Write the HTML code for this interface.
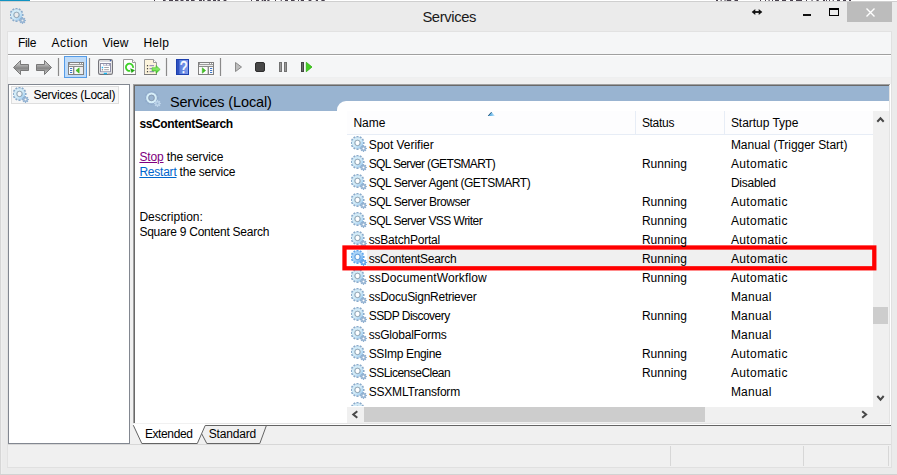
<!DOCTYPE html>
<html><head><meta charset="utf-8"><title>Services</title>
<style>
html,body{margin:0;padding:0}
body{width:897px;height:475px;overflow:hidden;background:#ebebeb;position:relative;font-family:"Liberation Sans",sans-serif;font-size:12px;color:#000}
.a{position:absolute}
.t{position:absolute;white-space:pre}
u{text-decoration:underline}
</style></head><body>
<!-- top edge remnants -->
<div class="a" style="left:0;top:0;width:897px;height:1px;background:#fff"></div>
<div class="a" style="left:0;top:0;width:30px;height:1px;background:#1193c2"></div>
<svg class="a" style="left:0;top:0" width="897" height="1" viewBox="0 0 897 1"><path d="M154 .5h1M163 .5h2.6M169 .5h4M175 .5h3.4M180.5 .5h3M186 .5h3M191 .5h3.6M199 .5h3M203 .5h1.6M207.4 .5h3.4M213 .5h3M217.5 .5h2.5M223.6 .5h2.8M251 .5h1M256 .5h3M261.7 .5h1.7M264 .5h2M267.3 .5h2.2M275 .5h1M280.7 .5h1.1M285 .5h3M291 .5h3.6M298 .5h1M300.8 .5h3.2M308.6 .5h2.8M315.8 .5h2.2M321.4 .5h3.3M716 .5h2M720.6 .5h1.1M724.5 .5h1.1M726.7 .5h4.5M734.5 .5h3.5M760 .5h1M765 .5h1M768.5 .5h1.2M772 .5h1M775 .5h4M782 .5h4M790 .5h3M796 .5h6M806 .5h1M811.5 .5h1.1M816.5 .5h2.2M823 .5h2M826 .5h1M829 .5h1M832.7 .5h1.1M837 .5h3M843 .5h3M849 .5h2" stroke="#2a2030" stroke-width="1" opacity=".85"/></svg>
<div class="a" style="left:0;top:1px;width:897px;height:1px;background:#cfcfcf"></div>
<div class="a" style="left:0;top:2px;width:1px;height:473px;background:#d6d6d6"></div><div class="a" style="left:1px;top:2px;width:1px;height:472px;background:#efefef"></div>
<!-- caption buttons -->
<div class="a" style="left:847px;top:2px;width:45px;height:20px;background:#bcbcbc"></div>
<svg class="a" style="left:0;top:0" width="897" height="32" viewBox="0 0 897 32">
 <path d="M866.5 8.5l8 8M874.5 8.5l-8 8" stroke="#fff" stroke-width="1.400" fill="none"/>
 <rect x="803" y="14" width="8" height="2" fill="#111"/>
 <rect x="829.5" y="8.5" width="9" height="7" fill="none" stroke="#000" stroke-width="1"/>
 <rect x="829" y="8" width="10" height="2" fill="#000"/>
 <path d="M753.500 12H760.500" stroke="#111" stroke-width="1.800" fill="none"/><path d="M751.700 12L755.300 8.900V15.100ZM762.300 12L758.700 8.900V15.100Z" fill="#111"/>
</svg>
<!-- client area -->
<div class="a" style="left:7px;top:31px;width:885px;height:437px;background:#f0f0f0"></div>
<div class="a" style="left:7px;top:31px;width:1px;height:437px;background:#e2e2e2"></div>
<div class="a" style="left:891px;top:31px;width:1px;height:437px;background:#e0e0e0"></div>
<div class="a" style="left:7px;top:467px;width:885px;height:1px;background:#e0e0e0"></div>
<div class="a" style="left:0;top:474px;width:897px;height:1px;background:#d2d2d2"></div>
<!-- menu bar -->
<div class="a" style="left:8px;top:32px;width:883px;height:22px;background:#f5f6f7"></div>
<div class="a" style="left:7px;top:31px;width:885px;height:1px;background:#e2e2e2"></div>
<div class="a" style="left:8px;top:54px;width:883px;height:1px;background:#a0a0a0"></div>
<!-- toolbar -->
<div class="a" style="left:8px;top:55px;width:883px;height:22px;background:#f5f6f7"></div>
<div class="a" style="left:8px;top:55px;width:883px;height:1px;background:#fff"></div>
<div class="a" style="left:8px;top:77px;width:883px;height:1px;background:#eeeff0"></div>
<svg class="a" style="left:0;top:55px" width="330" height="28" viewBox="0 55 330 28">
<defs>
<linearGradient id="ag" x1="0" y1="0" x2="0" y2="1"><stop offset="0" stop-color="#cfcfcf"/><stop offset=".3" stop-color="#b4b4b4"/><stop offset=".55" stop-color="#868686"/><stop offset=".8" stop-color="#b0b0b0"/><stop offset="1" stop-color="#c8c8c8"/></linearGradient>
<linearGradient id="hb" x1="0" y1="0" x2="1" y2="0"><stop offset="0" stop-color="#4f72d8"/><stop offset="1" stop-color="#7f9eec"/></linearGradient>
<linearGradient id="grn" x1="0" y1="0" x2="0" y2="1"><stop offset="0" stop-color="#4ccc2c"/><stop offset=".45" stop-color="#8aec68"/><stop offset="1" stop-color="#2cb418"/></linearGradient>
</defs>
<!-- back / forward arrows -->
<path d="M13.5 67.5L20.5 60.5V64.5H28.5V70.5H20.5V74.5Z" fill="url(#ag)" stroke="#6e6e6e" stroke-width=".9" stroke-linejoin="round"/>
<path d="M51.5 67.5L44.5 60.5V64.5H36.5V70.5H44.5V74.5Z" fill="url(#ag)" stroke="#6e6e6e" stroke-width=".9" stroke-linejoin="round"/>
<!-- separators -->
<path d="M58.5 58V76M89.5 58V76M166.5 58V76M220.5 58V76" stroke="#8a8a8a" stroke-width="1.2"/>
<!-- pressed highlight -->
<rect x="64.5" y="56.5" width="22" height="21" fill="#bfdbf8" stroke="#559ce8" stroke-width="1"/>
<!-- console tree icon -->
<g>
<rect x="68.500" y="62.500" width="15" height="12" fill="#fbfbfb" stroke="#808080"/>
<rect x="69" y="63" width="14" height="2" fill="#9c9c9c"/>
<rect x="70" y="63" width="9" height="1" fill="#f4f4f4"/><rect x="80" y="63" width="1" height="1" fill="#fff"/><rect x="82" y="63" width="1" height="1" fill="#fff"/>
<path d="M69 65.500H83" stroke="#ececec" stroke-width="1"/>
<path d="M69 66.500H83" stroke="#8c8c8c" stroke-width="1"/>
<path d="M73.700 67V74" stroke="#808080" stroke-width="1.300"/>
<path d="M70 68.500h2.200M70 70.500h2.200M70 72.500h2.200" stroke="#3f78c8" stroke-width="1"/>
<rect x="80" y="67" width="3" height="7" fill="#ececec"/>
<path d="M79.200 67.800V73.200L75.900 70.500Z" fill="#45c224" stroke="#2fa616" stroke-width=".5"/>
</g>
<!-- properties icon -->
<g>
<rect x="98.600" y="59.600" width="13.800" height="14.800" rx="1.600" fill="#fdfdfe" stroke="#74747a" stroke-width="1.200"/>
<path d="M99.500 61.500H111" stroke="#dcdce0" stroke-width="1"/>
<rect x="109.800" y="60" width="1.400" height="1.300" fill="#3f5fa8"/>
<rect x="100.500" y="63.500" width="10" height="8.300" fill="#fff" stroke="#9090a8" stroke-width="1"/>
<rect x="103.300" y="64" width="6.700" height="1.800" fill="#a6a6bc"/>
<rect x="104" y="64.200" width="2" height="1.100" fill="#fff"/><rect x="107" y="64.200" width="2" height="1.100" fill="#fff"/>
<rect x="101.700" y="66.800" width="1.500" height="1.500" fill="#1eb4f4"/>
<rect x="101.800" y="69.100" width="1.300" height="1.300" fill="#8c8c90"/>
<path d="M104.200 67.500H108.900M104.200 69.700H108.900" stroke="#a2a2a6" stroke-width="1"/>
<rect x="103.800" y="72.800" width="3.200" height="1.400" fill="#18b8f0"/>
<rect x="108.200" y="72.800" width="3" height="1.400" fill="#c2c2c2"/>
</g>
<!-- refresh icon -->
<g>
<path d="M123.500 59.500H132.500L135.500 62.500V74.500H123.500Z" fill="#fdfdfd" stroke="#9a9a9a" stroke-width="1"/>
<path d="M123 74.500H136" stroke="#7c7c7c" stroke-width="1"/>
<path d="M132.500 59.500V62.500H135.500" fill="#fff" stroke="#9a9a9a" stroke-width="1"/>
<path d="M133.06 67.80A3.6 3.6 0 1 0 130.25 70.82" fill="none" stroke="#3bd026" stroke-width="1.800"/>
<path d="M130.200 68.300L135 70.200L131.600 72.900Z" fill="#22a614"/>
</g>
<!-- export list icon -->
<g>
<path d="M144.500 59.500H153.500L156.500 62.500V74.500H144.500Z" fill="#fcf4dc" stroke="#9a9a9a" stroke-width="1"/>
<path d="M144 74.500H157" stroke="#7c7c7c" stroke-width="1"/>
<path d="M153.500 59.500V62.500H156.500" fill="#fff" stroke="#9a9a9a" stroke-width="1"/>
<rect x="146.900" y="65.100" width="1.200" height="1.200" fill="#333"/><rect x="146.900" y="68.100" width="1.200" height="1.200" fill="#333"/><rect x="146.900" y="71.100" width="1.200" height="1.200" fill="#333"/>
<path d="M149.500 65.700H154M149.500 68.700H154M149.500 71.700H154" stroke="#8580b4" stroke-width="1"/>
<path d="M152 67.700H156V65.400L160.200 69.400L156 73.400V71.100H152Z" fill="url(#grn)" stroke="#35b520" stroke-width=".5"/>
</g>
<!-- help icon -->
<g>
<rect x="176.500" y="59.500" width="12" height="15" fill="url(#hb)" stroke="#1c3fae" stroke-width="1"/>
<rect x="177" y="60" width="2.300" height="14" fill="#2f52c0"/>
<text transform="translate(183.500 72.500) scale(.82 1)" text-anchor="middle" font-family="Liberation Sans, sans-serif" font-weight="400" font-size="15.800" fill="#fff" stroke="#fff" stroke-width=".4">?</text>
</g>
<!-- action pane icon -->
<g>
<rect x="198.500" y="62.500" width="15" height="12" fill="#fbfbfb" stroke="#808080"/>
<rect x="199" y="63" width="14" height="2" fill="#9c9c9c"/>
<rect x="200" y="63" width="9" height="1" fill="#f4f4f4"/><rect x="210" y="63" width="1" height="1" fill="#fff"/><rect x="212" y="63" width="1" height="1" fill="#fff"/>
<path d="M199 65.500H213" stroke="#ececec" stroke-width="1"/>
<path d="M199 66.500H213" stroke="#8c8c8c" stroke-width="1"/>
<path d="M208.300 67V74" stroke="#808080" stroke-width="1.300"/>
<path d="M210 68.500h2.200M210 70.500h2.200M210 72.500h2.200" stroke="#3f78c8" stroke-width="1"/>
<path d="M202.300 67.800V73.200L205.600 70.500Z" fill="#45c224" stroke="#2fa616" stroke-width=".5"/>
</g>
<!-- play / stop / pause / restart -->
<path d="M235.500 62.500L241.500 67L235.500 71.500Z" fill="#bdbdbd" stroke="#8a8a8a" stroke-width="1" stroke-linejoin="round"/>
<rect x="255.500" y="62.500" width="9" height="9" rx="1.500" fill="#474747" stroke="#2e2e2e" stroke-width="1"/>
<rect x="279.500" y="62.500" width="2" height="9" fill="#9a9a9a" stroke="#727272" stroke-width="1"/>
<rect x="284.500" y="62.500" width="2" height="9" fill="#9a9a9a" stroke="#727272" stroke-width="1"/>
<rect x="301.500" y="62.500" width="2" height="9" fill="#6a6a6a" stroke="#444" stroke-width="1"/>
<path d="M306.300 62.300L312 67L306.300 71.700Z" fill="#45cf22" stroke="#2fb012" stroke-width=".8" stroke-linejoin="round"/>
</svg>

<!-- left tree panel -->
<div class="a" style="left:8px;top:84px;width:122px;height:360px;background:#fff;border:1px solid #828790;box-sizing:border-box"></div>
<div class="a" style="left:11px;top:86px;width:108px;height:18px;border:1px solid #dedede;box-sizing:border-box;background:#f7f7f7"></div>
<!-- right panel: sunken 3D border -->
<div class="a" style="left:133px;top:84px;width:758px;height:341px;background:#fff"></div>
<div class="a" style="left:133px;top:84px;width:757px;height:1px;background:#a0a0a0"></div>
<div class="a" style="left:133px;top:84px;width:1px;height:339px;background:#a0a0a0"></div>
<div class="a" style="left:134px;top:85px;width:755px;height:1px;background:#696969"></div>
<div class="a" style="left:134px;top:85px;width:1px;height:338px;background:#696969"></div>
<div class="a" style="left:889px;top:85px;width:1px;height:339px;background:#e3e3e3"></div>
<div class="a" style="left:133px;top:423px;width:757px;height:1px;background:#e3e3e3"></div>
<div class="a" style="left:135px;top:86px;width:754px;height:25px;background:#99b4d1"></div>
<div class="a" style="left:337px;top:101px;width:552px;height:20px;background:#fff;border-top-left-radius:9px"></div>
<!-- list header -->
<div class="a" style="left:347px;top:111px;width:526px;height:23px;background:#fdfdfe"></div>
<div class="a" style="left:347px;top:134px;width:526px;height:1px;background:#e7edf6"></div>
<div class="a" style="left:635px;top:111px;width:1px;height:23px;background:#e7edf6"></div>
<div class="a" style="left:724px;top:111px;width:1px;height:23px;background:#e7edf6"></div>
<svg class="a" style="left:486px;top:110px" width="12" height="8" viewBox="486 110 12 8"><defs><linearGradient id="sa" x1="0" y1="0" x2="1" y2="0"><stop offset="0" stop-color="#3f8fc8"/><stop offset=".5" stop-color="#79c0ec"/><stop offset="1" stop-color="#d4ecfa"/></linearGradient></defs><path d="M488 116L491.500 112L495 116Z" fill="url(#sa)"/><path d="M488.200 115.800L491.500 112.200" stroke="#2a5a7c" stroke-width="1" fill="none"/></svg>
<!-- selected row -->
<div class="a" style="left:367px;top:249px;width:506px;height:19px;background:#f0f0f0"></div>
<svg width="0" height="0" style="position:absolute"><defs><linearGradient id="gearg" x1="1.6" y1="2" x2="11.1" y2="11.5" gradientUnits="userSpaceOnUse"><stop offset="0" stop-color="#d2ebf8"/><stop offset="0.55" stop-color="#d2ebf8"/><stop offset="1" stop-color="#9ccbf0"/></linearGradient>
<g id="gear"><path d="M5.35 1.83L5.48 -0.13L7.52 -0.13L7.65 1.83L8.04 1.93L9.13 0.31L10.90 1.32L10.03 3.08L10.32 3.37L12.08 2.50L13.09 4.27L11.47 5.36L11.57 5.75L13.53 5.88L13.53 7.92L11.57 8.05L11.47 8.44L13.09 9.53L12.08 11.30L10.32 10.43L10.03 10.72L10.90 12.48L9.13 13.49L8.04 11.87L7.65 11.97L7.52 13.93L5.48 13.93L5.35 11.97L4.96 11.87L3.87 13.49L2.10 12.48L2.97 10.72L2.68 10.43L0.92 11.30L-0.09 9.53L1.53 8.44L1.43 8.05L-0.53 7.92L-0.53 5.88L1.43 5.75L1.53 5.36L-0.09 4.27L0.92 2.50L2.68 3.37L2.97 3.08L2.10 1.32L3.87 0.31L4.96 1.93ZM4.25 6.90a2.25 2.25 0 1 0 4.50 0a2.25 2.25 0 1 0 -4.50 0Z" fill="#8aabcb" fill-rule="evenodd"/><path d="M0.90 6.90a5.60 5.60 0 1 0 11.20 0a5.60 5.60 0 1 0 -11.20 0ZM4.25 6.90a2.25 2.25 0 1 0 4.50 0a2.25 2.25 0 1 0 -4.50 0Z" fill="url(#gearg)" fill-rule="evenodd"/><circle cx="6.5" cy="6.9" r="2.8" fill="none" stroke="#7c8893" stroke-width="0.9" opacity="0.75"/><path d="M11.76 10.22L11.93 9.05L13.07 9.05L13.24 10.22L13.59 10.36L14.53 9.65L15.35 10.47L14.64 11.41L14.78 11.76L15.95 11.93L15.95 13.07L14.78 13.24L14.64 13.59L15.35 14.53L14.53 15.35L13.59 14.64L13.24 14.78L13.07 15.95L11.93 15.95L11.76 14.78L11.41 14.64L10.47 15.35L9.65 14.53L10.36 13.59L10.22 13.24L9.05 13.07L9.05 11.93L10.22 11.76L10.36 11.41L9.65 10.47L10.47 9.65L11.41 10.36ZM11.50 12.50a1.00 1.00 0 1 0 2.00 0a1.00 1.00 0 1 0 -2.00 0Z" fill="#93b2d2" fill-rule="evenodd"/></g><linearGradient id="gearselg" x1="1.6" y1="2" x2="11.1" y2="11.5" gradientUnits="userSpaceOnUse"><stop offset="0" stop-color="#a8d3f8"/><stop offset="0.55" stop-color="#a8d3f8"/><stop offset="1" stop-color="#62aaf2"/></linearGradient>
<g id="gearsel"><path d="M5.35 1.83L5.48 -0.13L7.52 -0.13L7.65 1.83L8.04 1.93L9.13 0.31L10.90 1.32L10.03 3.08L10.32 3.37L12.08 2.50L13.09 4.27L11.47 5.36L11.57 5.75L13.53 5.88L13.53 7.92L11.57 8.05L11.47 8.44L13.09 9.53L12.08 11.30L10.32 10.43L10.03 10.72L10.90 12.48L9.13 13.49L8.04 11.87L7.65 11.97L7.52 13.93L5.48 13.93L5.35 11.97L4.96 11.87L3.87 13.49L2.10 12.48L2.97 10.72L2.68 10.43L0.92 11.30L-0.09 9.53L1.53 8.44L1.43 8.05L-0.53 7.92L-0.53 5.88L1.43 5.75L1.53 5.36L-0.09 4.27L0.92 2.50L2.68 3.37L2.97 3.08L2.10 1.32L3.87 0.31L4.96 1.93ZM4.25 6.90a2.25 2.25 0 1 0 4.50 0a2.25 2.25 0 1 0 -4.50 0Z" fill="#62a6ea" fill-rule="evenodd"/><path d="M0.90 6.90a5.60 5.60 0 1 0 11.20 0a5.60 5.60 0 1 0 -11.20 0ZM4.25 6.90a2.25 2.25 0 1 0 4.50 0a2.25 2.25 0 1 0 -4.50 0Z" fill="url(#gearselg)" fill-rule="evenodd"/><circle cx="6.5" cy="6.9" r="2.8" fill="none" stroke="#4d86c8" stroke-width="0.9" opacity="0.75"/><path d="M11.76 10.22L11.93 9.05L13.07 9.05L13.24 10.22L13.59 10.36L14.53 9.65L15.35 10.47L14.64 11.41L14.78 11.76L15.95 11.93L15.95 13.07L14.78 13.24L14.64 13.59L15.35 14.53L14.53 15.35L13.59 14.64L13.24 14.78L13.07 15.95L11.93 15.95L11.76 14.78L11.41 14.64L10.47 15.35L9.65 14.53L10.36 13.59L10.22 13.24L9.05 13.07L9.05 11.93L10.22 11.76L10.36 11.41L9.65 10.47L10.47 9.65L11.41 10.36ZM11.50 12.50a1.00 1.00 0 1 0 2.00 0a1.00 1.00 0 1 0 -2.00 0Z" fill="#5fa4ea" fill-rule="evenodd"/></g><g id="gearhdr"><path d="M5.35 1.83L5.48 -0.13L7.52 -0.13L7.65 1.83L8.04 1.93L9.13 0.31L10.90 1.32L10.03 3.08L10.32 3.37L12.08 2.50L13.09 4.27L11.47 5.36L11.57 5.75L13.53 5.88L13.53 7.92L11.57 8.05L11.47 8.44L13.09 9.53L12.08 11.30L10.32 10.43L10.03 10.72L10.90 12.48L9.13 13.49L8.04 11.87L7.65 11.97L7.52 13.93L5.48 13.93L5.35 11.97L4.96 11.87L3.87 13.49L2.10 12.48L2.97 10.72L2.68 10.43L0.92 11.30L-0.09 9.53L1.53 8.44L1.43 8.05L-0.53 7.92L-0.53 5.88L1.43 5.75L1.53 5.36L-0.09 4.27L0.92 2.50L2.68 3.37L2.97 3.08L2.10 1.32L3.87 0.31L4.96 1.93ZM4.25 6.90a2.25 2.25 0 1 0 4.50 0a2.25 2.25 0 1 0 -4.50 0Z" fill="#86a3c4" fill-rule="evenodd" opacity=".55"/><circle cx="6.5" cy="6.9" r="4.2" fill="none" stroke="#d6eef9" stroke-width="2.3"/><circle cx="6.5" cy="6.9" r="2.9" fill="none" stroke="#8796a6" stroke-width="0.9" opacity=".8"/><path d="M11.76 10.22L11.93 9.05L13.07 9.05L13.24 10.22L13.59 10.36L14.53 9.65L15.35 10.47L14.64 11.41L14.78 11.76L15.95 11.93L15.95 13.07L14.78 13.24L14.64 13.59L15.35 14.53L14.53 15.35L13.59 14.64L13.24 14.78L13.07 15.95L11.93 15.95L11.76 14.78L11.41 14.64L10.47 15.35L9.65 14.53L10.36 13.59L10.22 13.24L9.05 13.07L9.05 11.93L10.22 11.76L10.36 11.41L9.65 10.47L10.47 9.65L11.41 10.36ZM11.50 12.50a1.00 1.00 0 1 0 2.00 0a1.00 1.00 0 1 0 -2.00 0Z" fill="#c4dbee" fill-rule="evenodd" opacity=".85"/></g></defs></svg>
<svg class="a" style="left:10px;top:8px" width="17" height="17" viewBox="0 0 17 17"><use href="#gear"/></svg>
<svg class="a" style="left:13px;top:87px" width="17" height="17" viewBox="0 0 17 17"><use href="#gear"/></svg>
<svg class="a" style="left:145px;top:91px" width="17" height="17" viewBox="0 0 17 17"><use href="#gearhdr"/></svg>
<svg class="a" style="left:351px;top:136px" width="17" height="17" viewBox="0 0 17 17"><use href="#gear"/></svg>
<svg class="a" style="left:351px;top:155px" width="17" height="17" viewBox="0 0 17 17"><use href="#gear"/></svg>
<svg class="a" style="left:351px;top:174px" width="17" height="17" viewBox="0 0 17 17"><use href="#gear"/></svg>
<svg class="a" style="left:351px;top:193px" width="17" height="17" viewBox="0 0 17 17"><use href="#gear"/></svg>
<svg class="a" style="left:351px;top:212px" width="17" height="17" viewBox="0 0 17 17"><use href="#gear"/></svg>
<svg class="a" style="left:351px;top:231px" width="17" height="17" viewBox="0 0 17 17"><use href="#gear"/></svg>
<svg class="a" style="left:351px;top:250px" width="17" height="17" viewBox="0 0 17 17"><use href="#gearsel"/></svg>
<svg class="a" style="left:351px;top:269px" width="17" height="17" viewBox="0 0 17 17"><use href="#gear"/></svg>
<svg class="a" style="left:351px;top:288px" width="17" height="17" viewBox="0 0 17 17"><use href="#gear"/></svg>
<svg class="a" style="left:351px;top:307px" width="17" height="17" viewBox="0 0 17 17"><use href="#gear"/></svg>
<svg class="a" style="left:351px;top:326px" width="17" height="17" viewBox="0 0 17 17"><use href="#gear"/></svg>
<svg class="a" style="left:351px;top:345px" width="17" height="17" viewBox="0 0 17 17"><use href="#gear"/></svg>
<svg class="a" style="left:351px;top:364px" width="17" height="17" viewBox="0 0 17 17"><use href="#gear"/></svg>
<svg class="a" style="left:351px;top:383px" width="17" height="17" viewBox="0 0 17 17"><use href="#gear"/></svg>
<div class="a" style="left:351px;top:402px;width:17px;height:4px;overflow:hidden"><svg width="17" height="17" viewBox="0 0 17 17" style="display:block"><use href="#gear"/></svg></div>
<!-- vertical scrollbar -->
<div class="a" style="left:873px;top:111px;width:16px;height:296px;background:#f0f0f0"></div>
<div class="a" style="left:873px;top:307px;width:15px;height:17px;background:#cdcdcd"></div>
<svg class="a" style="left:873px;top:111px" width="16" height="296" viewBox="0 0 16 296"><path d="M4.300 10.700L7.500 7.300L10.700 10.700M4.300 285L7.500 288.700L10.700 285" stroke="#484848" stroke-width="2" fill="none"/></svg>
<!-- horizontal scrollbar -->
<div class="a" style="left:347px;top:407px;width:542px;height:16px;background:#f0f0f0"></div>
<div class="a" style="left:364px;top:407px;width:341px;height:15px;background:#cdcdcd"></div>
<svg class="a" style="left:347px;top:407px" width="526" height="16" viewBox="0 0 526 16"><path d="M10.300 4.300L6.300 7.500L10.300 10.700M515.200 4.300L519.100 7.500L515.200 10.700" stroke="#484848" stroke-width="2" fill="none"/></svg>
<!-- red highlight -->
<svg class="a" style="left:338px;top:241px" width="544" height="34" viewBox="338 241 544 34"><defs><filter id="rb" x="-2%" y="-20%" width="104%" height="140%"><feGaussianBlur stdDeviation="0.35"/></filter></defs><rect x="344.500" y="247.500" width="529.800" height="20.800" fill="none" stroke="#ff0000" stroke-width="4.300" filter="url(#rb)"/></svg>
<!-- tabs -->
<svg class="a" style="left:130px;top:423px" width="761" height="23" viewBox="130 423 761 23">
 <path d="M133.500 425.200L141.800 443.500H197.300L205.200 425.500L205.200 423.500H133.500Z" fill="#fff" stroke="none"/>
 <path d="M135 424H205V426H135Z" fill="#fff"/>
 <path d="M133.300 425.200L141.800 443.500H197.300L205.200 425.500H891" fill="none" stroke="#646464" stroke-width="1"/>
 <path d="M201.800 434L206.800 443.500H259.800L266.400 425.500" fill="none" stroke="#646464" stroke-width="1"/>
 <path d="M142 444.500H197M207 444.500H260" stroke="#c8c8c8" stroke-width="1"/>
</svg>
<!-- status bar -->
<div class="a" style="left:8px;top:444px;width:883px;height:1px;background:#d7d7d7"></div>
<div class="a" style="left:670px;top:446px;width:1px;height:20px;background:#d7d7d7"></div>
<div class="a" style="left:803px;top:446px;width:1px;height:20px;background:#d7d7d7"></div>
<div class="a" style="left:888px;top:446px;width:1px;height:20px;background:#d7d7d7"></div>
<span class="t " style="left:422.4px;top:10.0px;font-size:14.8px;line-height:14.8px;font-weight:400;color:#1a1a1a;letter-spacing:-0.393px">Services</span>
<span class="t " style="left:17.9px;top:36.8px;font-size:12px;line-height:12px;font-weight:400;color:#000;letter-spacing:-0.281px">File</span>
<span class="t " style="left:51.4px;top:36.8px;font-size:12px;line-height:12px;font-weight:400;color:#000;letter-spacing:0.528px">Action</span>
<span class="t " style="left:102.4px;top:36.8px;font-size:12px;line-height:12px;font-weight:400;color:#000;letter-spacing:0.068px">View</span>
<span class="t " style="left:143.4px;top:36.8px;font-size:12px;line-height:12px;font-weight:400;color:#000;letter-spacing:0.271px">Help</span>
<span class="t " style="left:33.4px;top:88.8px;font-size:12px;line-height:12px;font-weight:400;color:#000;letter-spacing:-0.269px">Services (Local)</span>
<span class="t " style="left:169.9px;top:94.5px;font-size:14.5px;line-height:14.5px;font-weight:400;color:#000;letter-spacing:-0.130px">Services (Local)</span>
<span class="t " style="left:139.4px;top:117.8px;font-size:12px;line-height:12px;font-weight:700;color:#000;letter-spacing:-0.350px">ssContentSearch</span>
<span class="t " style="left:139.4px;top:150.8px;font-size:12px;line-height:12px;font-weight:400;color:#000;letter-spacing:-0.136px"><u style="color:#800080">Stop</u> the service</span>
<span class="t " style="left:139.4px;top:165.8px;font-size:12px;line-height:12px;font-weight:400;color:#000;letter-spacing:-0.225px"><u style="color:#0066cc">Restart</u> the service</span>
<span class="t " style="left:139.4px;top:210.8px;font-size:12px;line-height:12px;font-weight:400;color:#000;letter-spacing:0.013px">Description:</span>
<span class="t " style="left:139.4px;top:225.8px;font-size:12px;line-height:12px;font-weight:400;color:#000;letter-spacing:-0.246px">Square 9 Content Search</span>
<span class="t " style="left:353.4px;top:116.8px;font-size:12px;line-height:12px;font-weight:400;color:#000;letter-spacing:-0.005px">Name</span>
<span class="t " style="left:641.9px;top:116.8px;font-size:12px;line-height:12px;font-weight:400;color:#000;letter-spacing:-0.306px">Status</span>
<span class="t " style="left:730.9px;top:116.8px;font-size:12px;line-height:12px;font-weight:400;color:#000;letter-spacing:-0.030px">Startup Type</span>
<span class="t " style="left:368.7px;top:138.8px;font-size:12px;line-height:12px;font-weight:400;color:#000;letter-spacing:-0.031px">Spot Verifier</span>
<span class="t " style="left:730.9px;top:138.8px;font-size:12px;line-height:12px;font-weight:400;color:#000;letter-spacing:-0.021px">Manual (Trigger Start)</span>
<span class="t " style="left:368.7px;top:157.8px;font-size:12px;line-height:12px;font-weight:400;color:#000;letter-spacing:-0.652px">SQL Server (GETSMART)</span>
<span class="t " style="left:641.9px;top:157.8px;font-size:12px;line-height:12px;font-weight:400;color:#000;letter-spacing:0.049px">Running</span>
<span class="t " style="left:730.9px;top:157.8px;font-size:12px;line-height:12px;font-weight:400;color:#000;letter-spacing:0.393px">Automatic</span>
<span class="t " style="left:368.7px;top:176.8px;font-size:12px;line-height:12px;font-weight:400;color:#000;letter-spacing:-0.464px">SQL Server Agent (GETSMART)</span>
<span class="t " style="left:730.9px;top:176.8px;font-size:12px;line-height:12px;font-weight:400;color:#000;letter-spacing:-0.243px">Disabled</span>
<span class="t " style="left:368.7px;top:195.8px;font-size:12px;line-height:12px;font-weight:400;color:#000;letter-spacing:-0.476px">SQL Server Browser</span>
<span class="t " style="left:641.9px;top:195.8px;font-size:12px;line-height:12px;font-weight:400;color:#000;letter-spacing:0.049px">Running</span>
<span class="t " style="left:730.9px;top:195.8px;font-size:12px;line-height:12px;font-weight:400;color:#000;letter-spacing:0.393px">Automatic</span>
<span class="t " style="left:368.7px;top:214.8px;font-size:12px;line-height:12px;font-weight:400;color:#000;letter-spacing:-0.535px">SQL Server VSS Writer</span>
<span class="t " style="left:641.9px;top:214.8px;font-size:12px;line-height:12px;font-weight:400;color:#000;letter-spacing:0.049px">Running</span>
<span class="t " style="left:730.9px;top:214.8px;font-size:12px;line-height:12px;font-weight:400;color:#000;letter-spacing:0.393px">Automatic</span>
<span class="t " style="left:368.7px;top:233.8px;font-size:12px;line-height:12px;font-weight:400;color:#000;letter-spacing:-0.212px">ssBatchPortal</span>
<span class="t " style="left:641.9px;top:233.8px;font-size:12px;line-height:12px;font-weight:400;color:#000;letter-spacing:0.049px">Running</span>
<span class="t " style="left:730.9px;top:233.8px;font-size:12px;line-height:12px;font-weight:400;color:#000;letter-spacing:0.393px">Automatic</span>
<span class="t " style="left:368.7px;top:252.8px;font-size:12px;line-height:12px;font-weight:400;color:#000;letter-spacing:-0.290px">ssContentSearch</span>
<span class="t " style="left:641.9px;top:252.8px;font-size:12px;line-height:12px;font-weight:400;color:#000;letter-spacing:0.049px">Running</span>
<span class="t " style="left:730.9px;top:252.8px;font-size:12px;line-height:12px;font-weight:400;color:#000;letter-spacing:0.393px">Automatic</span>
<span class="t " style="left:368.7px;top:271.8px;font-size:12px;line-height:12px;font-weight:400;color:#000;letter-spacing:0.129px">ssDocumentWorkflow</span>
<span class="t " style="left:641.9px;top:271.8px;font-size:12px;line-height:12px;font-weight:400;color:#000;letter-spacing:0.049px">Running</span>
<span class="t " style="left:730.9px;top:271.8px;font-size:12px;line-height:12px;font-weight:400;color:#000;letter-spacing:0.393px">Automatic</span>
<span class="t " style="left:368.7px;top:290.8px;font-size:12px;line-height:12px;font-weight:400;color:#000;letter-spacing:-0.262px">ssDocuSignRetriever</span>
<span class="t " style="left:730.9px;top:290.8px;font-size:12px;line-height:12px;font-weight:400;color:#000;letter-spacing:0.228px">Manual</span>
<span class="t " style="left:368.7px;top:309.8px;font-size:12px;line-height:12px;font-weight:400;color:#000;letter-spacing:-0.537px">SSDP Discovery</span>
<span class="t " style="left:641.9px;top:309.8px;font-size:12px;line-height:12px;font-weight:400;color:#000;letter-spacing:0.049px">Running</span>
<span class="t " style="left:730.9px;top:309.8px;font-size:12px;line-height:12px;font-weight:400;color:#000;letter-spacing:0.228px">Manual</span>
<span class="t " style="left:368.7px;top:328.8px;font-size:12px;line-height:12px;font-weight:400;color:#000;letter-spacing:-0.224px">ssGlobalForms</span>
<span class="t " style="left:730.9px;top:328.8px;font-size:12px;line-height:12px;font-weight:400;color:#000;letter-spacing:0.228px">Manual</span>
<span class="t " style="left:368.7px;top:347.8px;font-size:12px;line-height:12px;font-weight:400;color:#000;letter-spacing:-0.338px">SSImp Engine</span>
<span class="t " style="left:641.9px;top:347.8px;font-size:12px;line-height:12px;font-weight:400;color:#000;letter-spacing:0.049px">Running</span>
<span class="t " style="left:730.9px;top:347.8px;font-size:12px;line-height:12px;font-weight:400;color:#000;letter-spacing:0.393px">Automatic</span>
<span class="t " style="left:368.7px;top:366.8px;font-size:12px;line-height:12px;font-weight:400;color:#000;letter-spacing:-0.518px">SSLicenseClean</span>
<span class="t " style="left:641.9px;top:366.8px;font-size:12px;line-height:12px;font-weight:400;color:#000;letter-spacing:0.049px">Running</span>
<span class="t " style="left:730.9px;top:366.8px;font-size:12px;line-height:12px;font-weight:400;color:#000;letter-spacing:0.393px">Automatic</span>
<span class="t " style="left:368.7px;top:385.8px;font-size:12px;line-height:12px;font-weight:400;color:#000;letter-spacing:-0.195px">SSXMLTransform</span>
<span class="t " style="left:730.9px;top:385.8px;font-size:12px;line-height:12px;font-weight:400;color:#000;letter-spacing:0.228px">Manual</span>
<span class="t " style="left:144.9px;top:428.3px;font-size:12px;line-height:12px;font-weight:400;color:#000;letter-spacing:-0.388px">Extended</span>
<span class="t " style="left:208.7px;top:428.3px;font-size:12px;line-height:12px;font-weight:400;color:#000;letter-spacing:-0.172px">Standard</span>
</body></html>
